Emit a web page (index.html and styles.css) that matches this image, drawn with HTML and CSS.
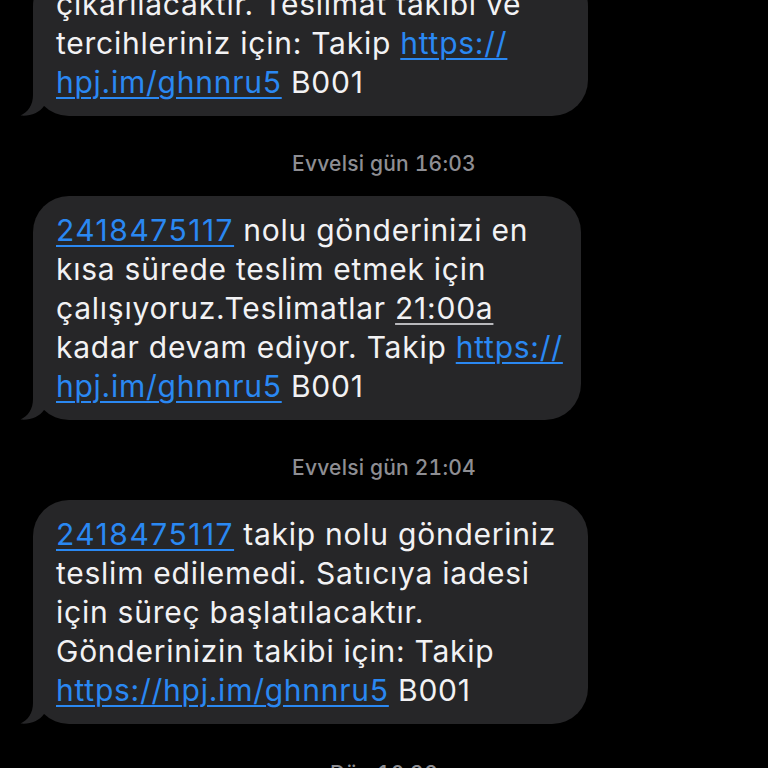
FILE: index.html
```html
<!DOCTYPE html>
<html lang="tr">
<head>
<meta charset="utf-8">
<title>Mesajlar</title>
<link rel="stylesheet" href="styles.css">
</head>
<body>
<main class="thread">
  <div class="bubble bubble--first bubble--w555">
    <p class="text">çıkarılacaktır. Teslimat takibi ve<br>tercihleriniz için: Takip <a class="link" href="#">https://<br>hpj.im/ghnnru5</a> B001</p>
    <svg class="tail" viewBox="0 0 40 45" width="40" height="45" aria-hidden="true"><path d="M13 0 L13 24 C13 34 8 41 0.5 44.6 C10 45.6 19 42 24 35 L40 35 L40 0 Z"/></svg>
  </div>

  <div class="stamp">Evvelsi gün 16:03</div>

  <div class="bubble bubble--w548">
    <p class="text"><a class="link num" href="#">2418475117</a> nolu gönderinizi en<br>kısa sürede teslim etmek için<br>çalışıyoruz.Teslimatlar <span class="detect">21:00a</span><br>kadar devam ediyor. Takip <a class="link" href="#">https://<br>hpj.im/ghnnru5</a> B001</p>
    <svg class="tail" viewBox="0 0 40 45" width="40" height="45" aria-hidden="true"><path d="M13 0 L13 24 C13 34 8 41 0.5 44.6 C10 45.6 19 42 24 35 L40 35 L40 0 Z"/></svg>
  </div>

  <div class="stamp">Evvelsi gün 21:04</div>

  <div class="bubble bubble--w555">
    <p class="text"><a class="link num" href="#">2418475117</a> takip nolu gönderiniz<br>teslim edilemedi. Satıcıya iadesi<br>için süreç başlatılacaktır.<br>Gönderinizin takibi için: Takip<br><a class="link" href="#">https://hpj.im/ghnnru5</a> B001</p>
    <svg class="tail" viewBox="0 0 40 45" width="40" height="45" aria-hidden="true"><path d="M13 0 L13 24 C13 34 8 41 0.5 44.6 C10 45.6 19 42 24 35 L40 35 L40 0 Z"/></svg>
  </div>

  <div class="stamp stamp--last">Dün 10:38</div>
</main>
</body>
</html>
```
FILE: styles.css
```css
html, body {
  margin: 0;
  padding: 0;
  background: #000;
}

body {
  width: 768px;
  height: 768px;
  overflow: hidden;
  font-family: Inter, "Noto Sans", "Liberation Sans", sans-serif;
}

.thread {
  display: flex;
  flex-direction: column;
  align-items: flex-start;
  padding-left: 33px;
}

.bubble {
  position: relative;
  box-sizing: border-box;
  background: #262628;
  border-radius: 36px;
  padding: 15px 20px 14px 23px;
}

.bubble--first {
  margin-top: -30px;
}

.bubble--w555 { width: 555px; }
.bubble--w548 { width: 548px; }

.text {
  margin: 0;
  color: #f2f2f4;
  font-size: 30px;
  line-height: 39px;
  letter-spacing: 0.025em;
  white-space: nowrap;
  position: relative;
  z-index: 1;
}

.link {
  color: #2a88f2;
  text-decoration: underline;
  text-decoration-thickness: 2px;
  text-underline-offset: 4px;
}

.num {
  letter-spacing: 0.05em;
}

.detect {
  text-decoration: underline;
  text-decoration-color: #b8b8bc;
  text-decoration-thickness: 2px;
  text-underline-offset: 4px;
}

.tail {
  position: absolute;
  left: -13px;
  bottom: 0;
  fill: #262628;
  display: block;
}

.stamp {
  align-self: center;
  margin: 36px 0 20px -33px;
  color: #8e8e93;
  font-size: 21px;
  line-height: 24px;
  font-weight: 500;
  letter-spacing: 0.01em;
  font-variant-numeric: tabular-nums;
}

.stamp--last {
  margin-top: 38px;
}
```
